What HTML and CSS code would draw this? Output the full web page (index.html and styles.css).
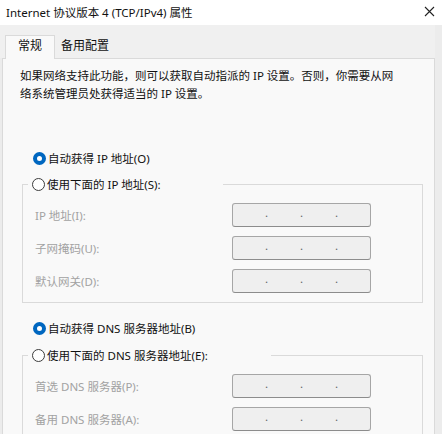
FILE: index.html
```html
<!DOCTYPE html>
<html lang="zh-CN">
<head>
  <meta charset="UTF-8" />
  <title>Internet 协议版本 4 (TCP/IPv4) 属性</title>
  <link rel="stylesheet" href="styles.css">
</head>
<body>

<div class="titlebar">
  <span>Internet 协议版本 4 (TCP/IPv4) 属性</span>
  <svg class="close" width="11" height="11" viewBox="0 0 11 11">
    <path d="M1 1 L10 10 M10 1 L1 10" stroke="#222" stroke-width="1.1" fill="none"/>
  </svg>
</div>

<div class="tabs">
  <div class="tab active">常规</div>
  <div class="tab">备用配置</div>
</div>

<div class="panel">
  <p class="intro">如果网络支持此功能，则可以获取自动指派的 IP 设置。否则，你需要从网<br>络系统管理员处获得适当的 IP 设置。</p>

  <label class="radio first"><span class="dot checked"></span>自动获得 IP 地址(O)</label>

  <fieldset class="group">
    <legend class="legend-ip"><label class="radio"><span class="dot"></span>使用下面的 IP 地址(S):</label></legend>
    <div class="row"><span class="lbl">IP 地址(I):</span><div class="ipbox"><i>.</i><i>.</i><i>.</i></div></div>
    <div class="row"><span class="lbl">子网掩码(U):</span><div class="ipbox"><i>.</i><i>.</i><i>.</i></div></div>
    <div class="row"><span class="lbl">默认网关(D):</span><div class="ipbox"><i>.</i><i>.</i><i>.</i></div></div>
  </fieldset>

  <label class="radio second"><span class="dot checked"></span>自动获得 DNS 服务器地址(B)</label>

  <fieldset class="group dns">
    <legend class="legend-dns"><label class="radio"><span class="dot"></span>使用下面的 DNS 服务器地址(E):</label></legend>
    <div class="row"><span class="lbl">首选 DNS 服务器(P):</span><div class="ipbox"><i>.</i><i>.</i><i>.</i></div></div>
    <div class="row"><span class="lbl">备用 DNS 服务器(A):</span><div class="ipbox"><i>.</i><i>.</i><i>.</i></div></div>
  </fieldset>
</div>

</body>
</html>
```

FILE: styles.css
```css
:root {
  --bg: #f0f0f0;
  --panel: #f9f9f9;
  --line: #dadada;
  --text: #111;
  --muted: #a2a2a2;
  --accent: #0067c0;
}
* {
  box-sizing: border-box;
}
body {
  margin: 0;
  width: 442px;
  height: 434px;
  overflow: hidden;
  background: #ececec;
  color: var(--text);
  font-family: "Noto Sans", "Noto Sans CJK SC", sans-serif;
  font-size: 11.5px;
}
.titlebar {
  height: 25px;
  background: #fff;
  display: flex;
  align-items: center;
  justify-content: space-between;
  padding: 0 6px 2px 6px;
}
.close {
  margin-right: 1px;
}
.tabs {
  height: 33px;
  background: var(--bg);
  display: flex;
  align-items: flex-end;
  padding-left: 5px;
  margin-right: 7px;
}
.tab {
  height: 22px;
  line-height: 20px;
  padding: 0 6px;
  font-size: 12px;
}
.tab.active {
  height: 24px;
  padding: 0 12px;
  background: var(--panel);
  border: 1px solid var(--line);
  border-bottom: none;
  margin-bottom: -1px;
  position: relative;
  z-index: 1;
}
.panel {
  margin-left: 2px;
  width: 433px;
  height: 376px;
  overflow: hidden;
  background: var(--panel);
  border: 1px solid var(--line);
  border-bottom: none;
  padding: 8px 0 0 17px;
}
.intro {
  margin: 0;
  line-height: 18px;
}
.radio {
  display: flex;
  align-items: center;
  height: 20px;
  white-space: nowrap;
}
.radio.first {
  margin: 45px 0 0 13px;
}
.radio.second {
  margin: 15px 0 0 13px;
}
.dot {
  width: 13px;
  height: 13px;
  border-radius: 50%;
  border: 1px solid #3c3c3c;
  background: #fff;
  margin-right: 2px;
  flex: none;
}
.dot.checked {
  border: 4px solid var(--accent);
  background: #fff;
}
.group {
  margin: 6px 0 0 2px;
  width: 401px;
  border: 1px solid var(--line);
  padding: 0 0 9px 5px;
}
.group.dns {
  margin-top: 7px;
}
.group legend {
  padding: 0 0 0 4px;
}
.legend-ip {
  width: 195px;
}
.legend-dns {
  width: 243px;
}
.row {
  display: flex;
  align-items: center;
  height: 24px;
  margin-top: 9px;
  padding-left: 7px;
}
.lbl {
  width: 197px;
  color: var(--muted);
}
.ipbox {
  width: 139px;
  height: 24px;
  border: 1px solid #a6a6a6;
  border-bottom-color: #8c8c8c;
  border-radius: 3px;
  background: #efefef;
  display: flex;
  justify-content: space-evenly;
  align-items: center;
}
.ipbox i {
  font-style: normal;
  color: #666;
  line-height: 10px;
  margin-top: -4px;
}
```
